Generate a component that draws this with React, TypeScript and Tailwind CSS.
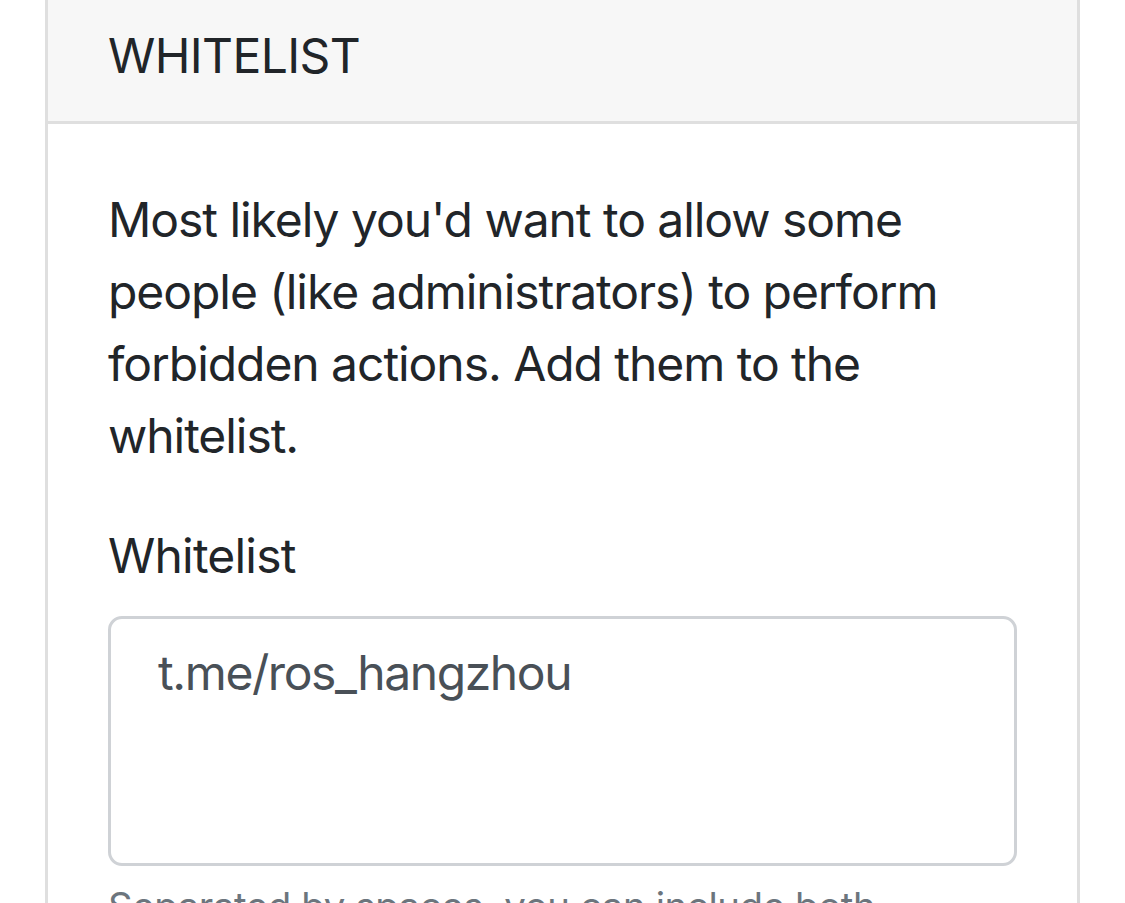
import React from 'react';

const App: React.FC = () => {
  return (
    <div
      className="min-h-[903px] bg-white text-[#212529]"
      style={{ fontFamily: 'Inter, "Noto Sans", sans-serif' }}
    >
      <div className="mx-[45px] border-x-[3px] border-b-[3px] border-[#dfdfdf] bg-white">
        {/* Card header */}
        <div className="h-[124px] border-b-[3px] border-[#dfdfdf] bg-[#f7f7f7] px-[60px] pt-[20px]">
          <h5 className="text-[48px] leading-[72px] font-normal tracking-[-0.6px]">WHITELIST</h5>
        </div>

        {/* Card body */}
        <div className="p-[60px]">
          <p className="mb-[48px] text-[48px] leading-[72px] tracking-[-1.05px]">
            Most likely you'd want to allow some people (like administrators) to perform forbidden
            actions. Add them to the whitelist.
          </p>

          <div>
            <label className="mb-[24px] block text-[48px] leading-[72px] tracking-[-0.8px]">Whitelist</label>
            <textarea
              className="block h-[250px] w-full resize-none rounded-[14px] border-[3px] border-[#cfd2d6] bg-white pt-[18px] pr-[36px] pl-[47px] text-[48px] leading-[72px] tracking-[-1.4px] text-[#495057] outline-none"
              defaultValue="t.me/ros_hangzhou"
            />
            <small className="mt-[12px] block text-[38.4px] leading-[57.6px] tracking-[-0.4px] text-[#6c757d]">
              Separated by spaces, you can include both usernames and IDs.
            </small>
          </div>
        </div>
      </div>
    </div>
  );
};

export default App;
